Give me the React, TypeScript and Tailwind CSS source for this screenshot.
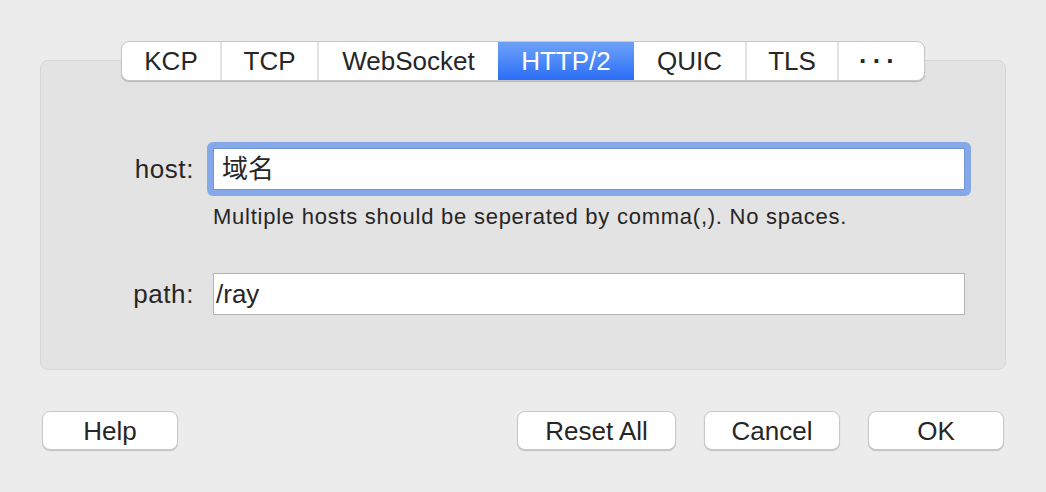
const tabs = ['KCP', 'TCP', 'WebSocket', 'HTTP/2', 'QUIC', 'TLS', '···'];
const tabWidths = ['w-[98px]', 'w-[97px]', 'w-[181px]', 'w-[136px]', 'w-[111px]', 'w-[92px]', 'w-[87px]'];

function Button({ label, width }: { label: string; width: string }) {
  return (
    <button
      className={`${width} h-[39px] rounded-[8px] border border-[#c9c9c9] bg-white text-[26px] leading-none text-[#262626] shadow-[0_1px_1px_rgba(0,0,0,0.18)]`}
    >
      {label}
    </button>
  );
}

export default function App() {
  return (
    <div
      className="w-[1046px] h-[492px] bg-[#ececec] px-[40px] pt-[41px] text-[#262626]"
      style={{ fontFamily: '"Liberation Sans", "Noto Sans CJK SC", sans-serif' }}
    >
      {/* segmented control */}
      <div className="relative z-10 flex justify-center">
        <div className="flex h-[40px] overflow-hidden rounded-[8px] border border-[#c6c6c6] bg-white shadow-[0_1px_1px_rgba(0,0,0,0.2)]">
          {tabs.map((t, i) => {
            const active = t === 'HTTP/2';
            return (
              <div
                key={t}
                className={`${tabWidths[i]} flex items-center justify-center text-[26px] leading-none ${
                  active
                    ? 'bg-gradient-to-b from-[#6ea2f8] to-[#2a6cf6] text-white'
                    : 'text-[#262626]'
                } ${i > 0 && !active && tabs[i - 1] !== 'HTTP/2' ? 'border-l-2 border-[#e2e2e2]' : ''}`}
              >
                {t === '···' ? <span className="pr-[4px] text-[26px] font-bold tracking-[5px]">···</span> : t}
              </div>
            );
          })}
        </div>
      </div>

      {/* panel */}
      <div className="mt-[-21px] h-[310px] rounded-[8px] border border-[#d6d6d6] bg-[#e3e3e3] pt-[81px]">
        <div className="flex items-center">
          <div className="w-[153px] text-right text-[26px] leading-none tracking-[0.6px]">host:</div>
          <div className="ml-[13px] rounded-[6px] bg-[#85a8e8] p-[6px]">
            <div className="flex h-[42px] w-[752px] items-center border border-[#7096dc] bg-white pl-[8px] text-[26px] leading-none">
              域名
            </div>
          </div>
        </div>
        <div className="ml-[172px] mt-[8px] text-[22px] leading-[26px] tracking-[0.75px]">
          Multiple hosts should be seperated by comma(,). No spaces.
        </div>
        <div className="mt-[43px] flex items-center">
          <div className="w-[153px] text-right text-[26px] leading-none tracking-[0.6px]">path:</div>
          <div className="ml-[19px] flex h-[42px] w-[752px] items-center border border-[#b4b4b4] bg-white pl-[2px] text-[26px] leading-none">
            /ray
          </div>
        </div>
      </div>

      {/* footer buttons */}
      <div className="mt-[41px] flex px-[2px]">
        <Button label="Help" width="w-[136px]" />
        <div className="ml-auto flex gap-[28px]">
          <Button label="Reset All" width="w-[159px]" />
          <Button label="Cancel" width="w-[136px]" />
          <Button label="OK" width="w-[136px]" />
        </div>
      </div>
    </div>
  );
}
